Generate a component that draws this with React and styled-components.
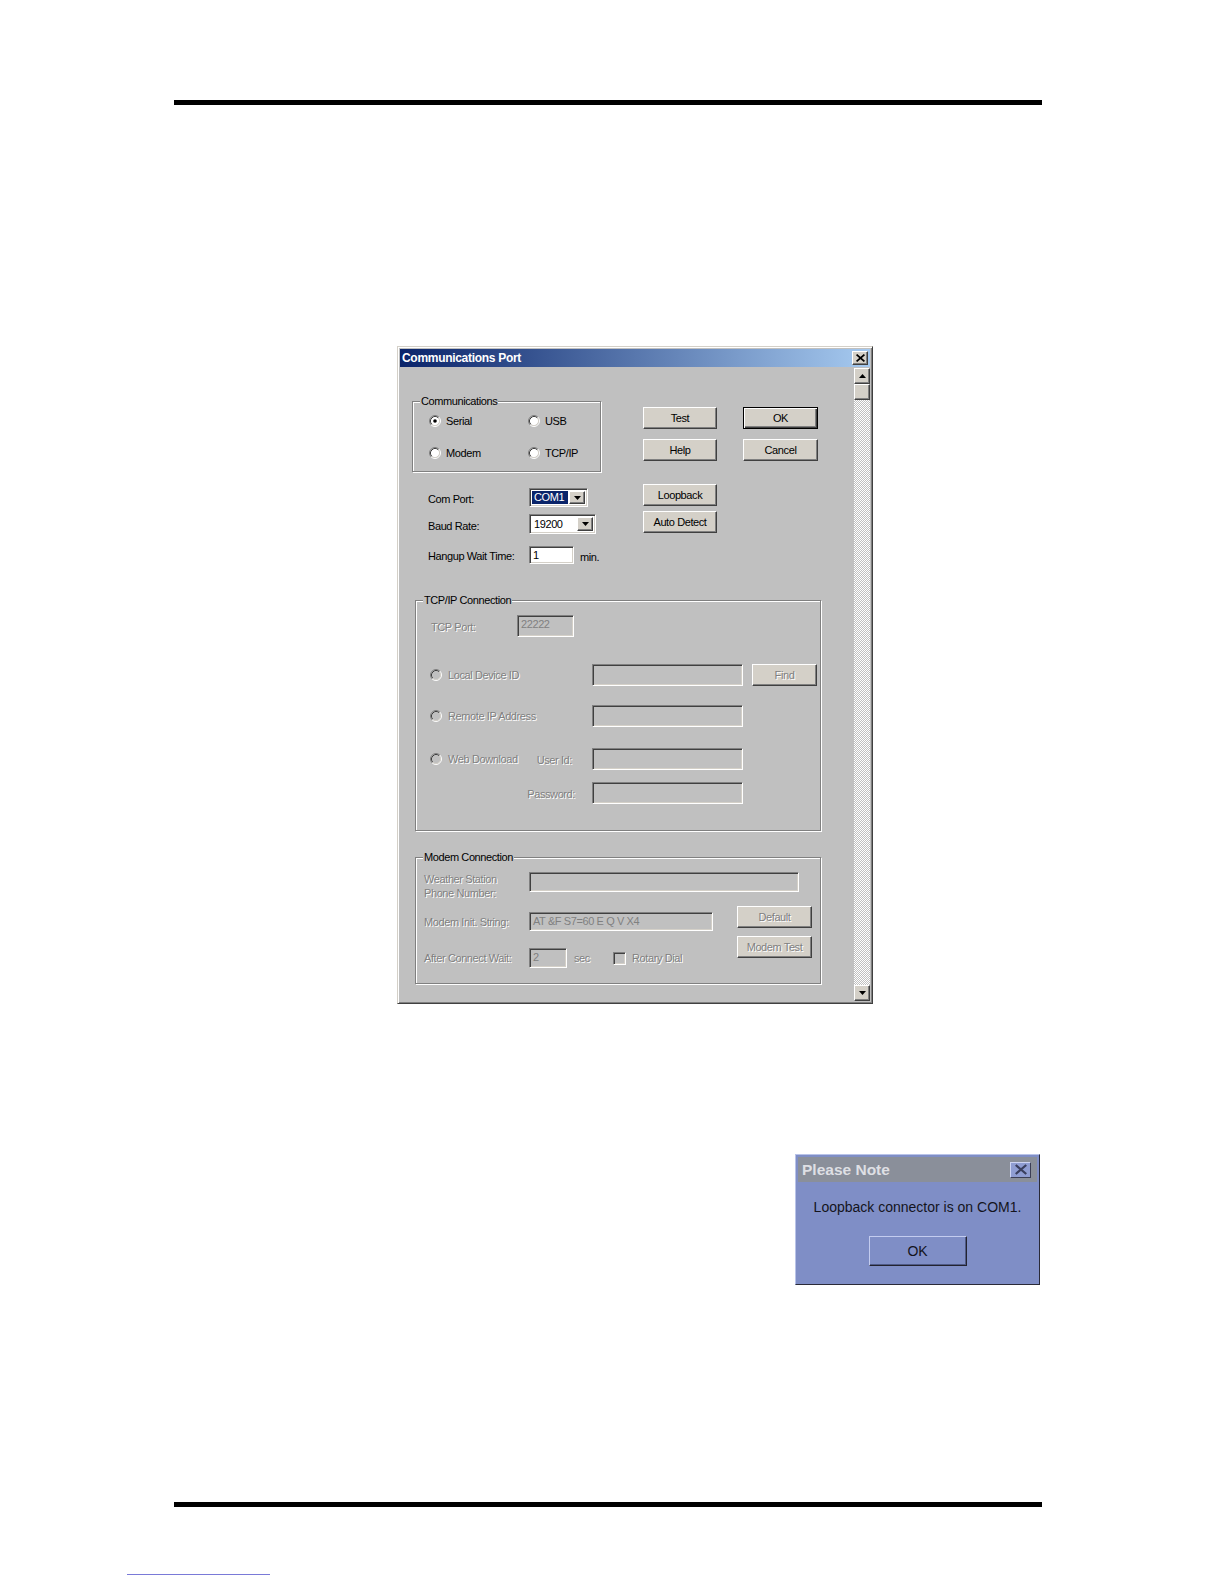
import React from 'react';
import styled, { createGlobalStyle } from 'styled-components';

const GlobalStyle = createGlobalStyle`
  html, body {
    margin: 0;
    padding: 0;
    background: #fff;
  }
  body {
    font-family: "Liberation Sans", Arial, sans-serif;
  }
`;

const Page = styled.div`
  width: 1224px;
  height: 1584px;
  overflow: hidden;
  display: flow-root;
`;

const Rule = styled.div`
  margin: ${(p) => p.$top}px 0 0 174px;
  width: 868px;
  height: 5px;
  background: #000;
`;

const LinkLine = styled.div`
  margin: 67px 0 0 127px;
  width: 143px;
  height: 1px;
  background: #7a7ad8;
`;

/* ---------- classic window ---------- */

const Window = styled.div`
  margin: 241px 0 0 397px;
  width: 476px;
  height: 658px;
  box-sizing: border-box;
  background: #c0c0c0;
  border: 1px solid;
  border-color: #d4d0c8 #404040 #404040 #d4d0c8;
  box-shadow: inset 1px 1px 0 #fff, inset -1px -1px 0 #808080;
  padding: 2px;
  display: flex;
  flex-direction: column;
  font-size: 11px;
  letter-spacing: -0.4px;
  line-height: 13px;
  color: #000;
`;

const TitleBar = styled.div`
  height: 18px;
  flex-shrink: 0;
  display: flex;
  align-items: center;
  justify-content: space-between;
  padding: 0 2px;
  background: linear-gradient(to right, #0a246a, #a6caf0);
`;

const TitleText = styled.span`
  color: #fff;
  font-weight: bold;
  font-size: 12px;
  letter-spacing: -0.3px;
`;

const raised = `
  border: 1px solid;
  border-color: #fff #404040 #404040 #fff;
  box-shadow: inset -1px -1px 0 #808080;
  background: #d4d0c8;
`;

const sunken = `
  border: 1px solid;
  border-color: #808080 #fff #fff #808080;
  box-shadow: inset 1px 1px 0 #404040, inset -1px -1px 0 #d4d0c8;
`;

const CloseBox = styled.div`
  box-sizing: border-box;
  width: 16px;
  height: 14px;
  ${raised}
  display: flex;
  align-items: center;
  justify-content: center;
`;

const Body = styled.div`
  flex: 1;
  min-height: 0;
  margin-top: 1px;
  display: flex;
`;

const Content = styled.div`
  flex: 1;
  padding-left: 1px;
`;

const Scrollbar = styled.div`
  width: 16px;
  flex-shrink: 0;
  display: flex;
  flex-direction: column;
  background: repeating-conic-gradient(#c0c0c0 0 25%, #fff 0 50%) 0 0 / 2px 2px;
`;

const ScrollPart = styled.div`
  box-sizing: border-box;
  width: 16px;
  height: 16px;
  ${raised}
  display: flex;
  align-items: center;
  justify-content: center;
`;

const ScrollTrack = styled.div`
  flex: 1;
`;

/* ---------- group boxes ---------- */

const Group = styled.div`
  position: relative;
  box-sizing: border-box;
  width: ${(p) => p.$w}px;
  height: ${(p) => p.$h}px;
  margin: ${(p) => p.$mt || 0}px 0 0 ${(p) => p.$ml || 0}px;
  padding-top: ${(p) => p.$pt || 0}px;
  border: 1px solid #808080;
  box-shadow: inset 1px 1px 0 #fff, 1px 1px 0 #fff;
`;

const GroupTitle = styled.span`
  position: absolute;
  top: -7px;
  left: 7px;
  padding: 0 1px;
  background: #c0c0c0;
  line-height: 12px;
`;

const RadioGrid = styled.div`
  display: grid;
  grid-template-columns: 99px auto;
  grid-auto-rows: 16px;
  row-gap: 16px;
  padding: 11px 0 0 16px;
`;

const Choice = styled.div`
  display: flex;
  align-items: center;
  gap: ${(p) => p.$gap || 5}px;
  flex-shrink: 0;
  color: ${(p) => (p.$disabled ? '#808080' : '#000')};
  text-shadow: ${(p) => (p.$disabled ? '1px 1px 0 #fff' : 'none')};
`;

/* ---------- rows ---------- */

const TopRow = styled.div`
  display: flex;
  align-items: flex-start;
  margin-top: ${(p) => p.$mt}px;
`;

const LeftCol = styled.div`
  box-sizing: border-box;
  width: 242px;
  flex-shrink: 0;
  padding: ${(p) => p.$pad};
`;

const ButtonGrid = styled.div`
  display: grid;
  grid-template-columns: 74px 75px;
  grid-auto-rows: 22px;
  column-gap: 26px;
  row-gap: 10px;
  margin-top: 6px;
`;

const ButtonStack = styled.div`
  display: flex;
  flex-direction: column;
  gap: ${(p) => p.$gap}px;
  margin-top: ${(p) => p.$mt || 0}px;
`;

const FieldRow = styled.div`
  display: flex;
  align-items: ${(p) => p.$align || 'center'};
  height: ${(p) => p.$h}px;
  margin-top: ${(p) => p.$mt || 0}px;
`;

const Label = styled.span`
  display: block;
  box-sizing: border-box;
  flex-shrink: 0;
  width: ${(p) => (p.$w ? `${p.$w}px` : 'auto')};
  margin-left: ${(p) => p.$ml || 0}px;
  padding-top: ${(p) => p.$pt || 0}px;
  line-height: ${(p) => p.$lh || 13}px;
  white-space: nowrap;
  color: ${(p) => (p.$disabled ? '#808080' : '#000')};
  text-shadow: ${(p) => (p.$disabled ? '1px 1px 0 #fff' : 'none')};
`;

const LeadCell = styled.div`
  box-sizing: border-box;
  flex-shrink: 0;
  width: 176px;
  display: flex;
  align-items: center;
  justify-content: ${(p) => p.$justify || 'flex-start'};
  padding: 0 ${(p) => p.$pr || 0}px 0 ${(p) => p.$pl || 0}px;
`;

const ModemBottom = styled.div`
  display: flex;
  margin-top: 14px;
`;

const ModemFields = styled.div`
  box-sizing: border-box;
  width: 321px;
  padding: 6px 0 0 8px;
`;

/* ---------- controls ---------- */

const Button = styled.button`
  box-sizing: border-box;
  width: ${(p) => p.$w}px;
  height: 22px;
  margin: 0 0 0 ${(p) => p.$ml || 0}px;
  padding: 0;
  font: inherit;
  letter-spacing: inherit;
  cursor: default;
  flex-shrink: 0;
  display: flex;
  align-items: center;
  justify-content: center;
  background: #d4d0c8;
  border: 1px solid;
  border-color: ${(p) => (p.$default ? '#000' : '#fff #404040 #404040 #fff')};
  box-shadow: ${(p) =>
    p.$default
      ? 'inset 1px 1px 0 #fff, inset -1px -1px 0 #404040, inset -2px -2px 0 #808080'
      : 'inset -1px -1px 0 #808080'};
  color: ${(p) => (p.$disabled ? '#808080' : '#000')};
  text-shadow: ${(p) => (p.$disabled ? '1px 1px 0 #fff' : 'none')};
`;

const TextBox = styled.div`
  box-sizing: border-box;
  flex-shrink: 0;
  width: ${(p) => p.$w}px;
  height: ${(p) => p.$h}px;
  margin-left: ${(p) => p.$ml || 0}px;
  ${sunken}
  background: ${(p) => (p.$disabled ? '#c0c0c0' : '#fff')};
  color: ${(p) => (p.$disabled ? '#808080' : '#000')};
  padding: 2px 3px 0;
  white-space: nowrap;
  overflow: hidden;
  line-height: 13px;
`;

const Combo = styled.div`
  box-sizing: border-box;
  flex-shrink: 0;
  width: ${(p) => p.$w}px;
  height: ${(p) => p.$h}px;
  ${sunken}
  background: #fff;
  padding: 2px;
  display: flex;
`;

const ComboValue = styled.span`
  flex: 1;
  display: flex;
  align-items: center;
  padding: 0 2px;
  margin-right: 1px;
  background: ${(p) => (p.$selected ? '#0a246a' : 'transparent')};
  color: ${(p) => (p.$selected ? '#fff' : '#000')};
`;

const ComboArrow = styled.span`
  box-sizing: border-box;
  width: 16px;
  ${raised}
  display: flex;
  align-items: center;
  justify-content: center;
`;

const CheckBox = styled.span`
  box-sizing: border-box;
  display: block;
  width: 13px;
  height: 13px;
  ${sunken}
  background: #c0c0c0;
`;

/* ---------- note dialog ---------- */

const Note = styled.div`
  margin: 150px 0 0 795px;
  width: 245px;
  height: 131px;
  box-sizing: border-box;
  background: #7f8ec6;
  border: 1px solid;
  border-color: #b9c3e8 #2a2a38 #2a2a38 #b9c3e8;
  padding: 2px;
  display: flex;
  flex-direction: column;
  font-family: "Liberation Sans", Arial, sans-serif;
`;

const NoteTitle = styled.div`
  height: 25px;
  flex-shrink: 0;
  display: flex;
  align-items: center;
  justify-content: space-between;
  padding: 0 6px 0 4px;
  background: #8a8f9a;
`;

const NoteTitleText = styled.span`
  color: #dedfe4;
  font-weight: bold;
  font-size: 15.5px;
`;

const NoteClose = styled.div`
  box-sizing: border-box;
  width: 21px;
  height: 16px;
  background: #8f9dd2;
  border: 1px solid;
  border-color: #cdd4f2 #3c3f55 #3c3f55 #cdd4f2;
  display: flex;
  align-items: center;
  justify-content: center;
`;

const NoteText = styled.div`
  margin-top: 16px;
  text-align: center;
  font-size: 14px;
  line-height: 18px;
  color: #14141c;
`;

const NoteButton = styled.button`
  box-sizing: border-box;
  width: 98px;
  height: 30px;
  margin: 20px auto 0;
  padding: 0;
  cursor: default;
  font-family: "Liberation Sans", Arial, sans-serif;
  font-size: 14px;
  color: #14141c;
  background: #7f8ec6;
  border: 1px solid;
  border-color: #c3ccef #23232f #23232f #c3ccef;
  box-shadow: inset -1px -1px 0 #4f5a86;
`;

/* ---------- drawings ---------- */

function Radio({ checked, disabled }) {
  return (
    <svg width="12" height="12" viewBox="0 0 12 12">
      <circle cx="6" cy="6" r="4.5" fill={disabled ? '#c0c0c0' : '#fff'} />
      <path d="M2.11 9.89A5.5 5.5 0 0 1 9.89 2.11" stroke="#808080" fill="none" />
      <path d="M9.89 2.11A5.5 5.5 0 0 1 2.11 9.89" stroke="#fff" fill="none" />
      <path d="M2.82 9.18A4.5 4.5 0 0 1 9.18 2.82" stroke="#404040" fill="none" />
      <path d="M9.18 2.82A4.5 4.5 0 0 1 2.82 9.18" stroke="#d4d0c8" fill="none" />
      {checked && <circle cx="6" cy="6" r="1.8" fill="#000" />}
    </svg>
  );
}

const Arrow = ({ up }) => (
  <svg width="7" height="4" viewBox="0 0 7 4">
    <path d={up ? 'M0 4h7L3.5 0z' : 'M0 0h7L3.5 4z'} fill="#000" />
  </svg>
);

const Cross = ({ size, color, width }) => (
  <svg width={size} height={size - 1} viewBox="0 0 8 7">
    <path d="M0.5 0.5L7.5 6.5M7.5 0.5L0.5 6.5" stroke={color} strokeWidth={width} />
  </svg>
);

export default function App() {
  return (
    <Page>
      <GlobalStyle />
      <Rule $top={100} />

      <Window>
        <TitleBar>
          <TitleText>Communications Port</TitleText>
          <CloseBox>
            <Cross size={9} color="#000" width={1.6} />
          </CloseBox>
        </TitleBar>

        <Body>
          <Content>
            <TopRow $mt={33}>
              <LeftCol $pad="0 0 0 11px">
                <Group $w={189} $h={71}>
                  <GroupTitle>Communications</GroupTitle>
                  <RadioGrid>
                    <Choice><Radio checked />Serial</Choice>
                    <Choice><Radio />USB</Choice>
                    <Choice><Radio />Modem</Choice>
                    <Choice><Radio />TCP/IP</Choice>
                  </RadioGrid>
                </Group>
              </LeftCol>
              <ButtonGrid>
                <Button $w={74}>Test</Button>
                <Button $w={75} $default>OK</Button>
                <Button $w={74}>Help</Button>
                <Button $w={75}>Cancel</Button>
              </ButtonGrid>
            </TopRow>

            <TopRow $mt={12}>
              <LeftCol $pad="4px 0 0 27px">
                <FieldRow $h={19}>
                  <Label $w={101} $pt={4}>Com Port:</Label>
                  <Combo $w={59} $h={19}>
                    <ComboValue $selected>COM1</ComboValue>
                    <ComboArrow><Arrow /></ComboArrow>
                  </Combo>
                </FieldRow>
                <FieldRow $h={20} $mt={7}>
                  <Label $w={101} $pt={5}>Baud Rate:</Label>
                  <Combo $w={67} $h={20}>
                    <ComboValue>19200</ComboValue>
                    <ComboArrow><Arrow /></ComboArrow>
                  </Combo>
                </FieldRow>
                <FieldRow $h={18} $mt={12}>
                  <Label $w={101} $pt={3}>Hangup Wait Time:</Label>
                  <TextBox $w={45} $h={18}>1</TextBox>
                  <Label $ml={6} $pt={4}>min.</Label>
                </FieldRow>
              </LeftCol>
              <ButtonStack $gap={5}>
                <Button $w={74}>Loopback</Button>
                <Button $w={74}>Auto Detect</Button>
              </ButtonStack>
            </TopRow>

            <Group $w={406} $h={231} $mt={36} $ml={14} $pt={14}>
              <GroupTitle>TCP/IP Connection</GroupTitle>
              <FieldRow $h={22}>
                <Label $w={86} $ml={15} $pt={2} $disabled>TCP Port:</Label>
                <TextBox $w={57} $h={22} $disabled>22222</TextBox>
              </FieldRow>
              <FieldRow $h={22} $mt={27}>
                <LeadCell $pl={14}>
                  <Choice $gap={6} $disabled><Radio disabled />Local Device ID</Choice>
                </LeadCell>
                <TextBox $w={151} $h={22} $disabled />
                <Button $w={65} $ml={9} $disabled>Find</Button>
              </FieldRow>
              <FieldRow $h={22} $mt={19}>
                <LeadCell $pl={14}>
                  <Choice $gap={6} $disabled><Radio disabled />Remote IP Address</Choice>
                </LeadCell>
                <TextBox $w={151} $h={22} $disabled />
              </FieldRow>
              <FieldRow $h={22} $mt={21}>
                <LeadCell $pl={14} $pr={20} $justify="space-between">
                  <Choice $gap={6} $disabled><Radio disabled />Web Download</Choice>
                  <Label $disabled $pt={2}>User Id:</Label>
                </LeadCell>
                <TextBox $w={151} $h={22} $disabled />
              </FieldRow>
              <FieldRow $h={22} $mt={12}>
                <LeadCell $pr={17} $justify="flex-end">
                  <Label $disabled $pt={2}>Password:</Label>
                </LeadCell>
                <TextBox $w={151} $h={22} $disabled />
              </FieldRow>
            </Group>

            <Group $w={406} $h={127} $mt={26} $ml={14} $pt={14}>
              <GroupTitle>Modem Connection</GroupTitle>
              <FieldRow $h={20} $align="flex-start">
                <Label $w={105} $ml={8} $lh={14} $disabled>
                  Weather Station
                  <br />
                  Phone Number:
                </Label>
                <TextBox $w={270} $h={20} $disabled />
              </FieldRow>
              <ModemBottom>
                <ModemFields>
                  <FieldRow $h={19}>
                    <Label $w={105} $pt={2} $disabled>Modem Init. String:</Label>
                    <TextBox $w={184} $h={19} $disabled>AT &amp;F S7=60 E Q V X4</TextBox>
                  </FieldRow>
                  <FieldRow $h={20} $mt={17}>
                    <Label $w={105} $disabled>After Connect Wait:</Label>
                    <TextBox $w={38} $h={20} $disabled>2</TextBox>
                    <Label $w={39} $ml={7} $disabled>sec</Label>
                    <Choice $gap={6} $disabled>
                      <CheckBox />
                      Rotary Dial
                    </Choice>
                  </FieldRow>
                </ModemFields>
                <ButtonStack $gap={8}>
                  <Button $w={75} $disabled>Default</Button>
                  <Button $w={75} $disabled>Modem Test</Button>
                </ButtonStack>
              </ModemBottom>
            </Group>
          </Content>

          <Scrollbar>
            <ScrollPart><Arrow up /></ScrollPart>
            <ScrollPart />
            <ScrollTrack />
            <ScrollPart><Arrow /></ScrollPart>
          </Scrollbar>
        </Body>
      </Window>

      <Note>
        <NoteTitle>
          <NoteTitleText>Please Note</NoteTitleText>
          <NoteClose>
            <Cross size={12} color="#3a3f5e" width={1.5} />
          </NoteClose>
        </NoteTitle>
        <NoteText>Loopback connector is on COM1.</NoteText>
        <NoteButton>OK</NoteButton>
      </Note>

      <Rule $top={217} />
      <LinkLine />
    </Page>
  );
}
